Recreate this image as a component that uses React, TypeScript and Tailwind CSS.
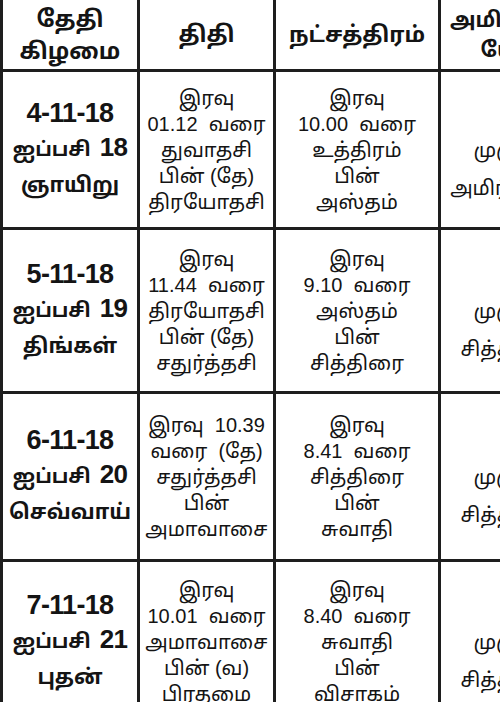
import React from 'react';

interface DayRow {
  date: string;
  monthDay: string;
  weekday: string;
  thithi: string[];
  star: string[];
  yogam: string[];
}

const rows: DayRow[] = [
  {
    date: '4-11-18',
    monthDay: '18',
    weekday: 'ஞாயிறு',
    thithi: ['இரவு', '01.12  வரை', 'துவாதசி', 'பின் (தே)', 'திரயோதசி'],
    star: ['இரவு', '10.00  வரை', 'உத்திரம்', 'பின்', 'அஸ்தம்'],
    yogam: ['நாள்', 'முழுவதும்', 'அமிர்தயோகம்'],
  },
  {
    date: '5-11-18',
    monthDay: '19',
    weekday: 'திங்கள்',
    thithi: ['இரவு', '11.44  வரை', 'திரயோதசி', 'பின் (தே)', 'சதுர்த்தசி'],
    star: ['இரவு', '9.10  வரை', 'அஸ்தம்', 'பின்', 'சித்திரை'],
    yogam: ['நாள்', 'முழுவதும்', 'சித்தயோகம்'],
  },
  {
    date: '6-11-18',
    monthDay: '20',
    weekday: 'செவ்வாய்',
    thithi: ['இரவு  10.39', 'வரை  (தே)', 'சதுர்த்தசி', 'பின்', 'அமாவாசை'],
    star: ['இரவு', '8.41  வரை', 'சித்திரை', 'பின்', 'சுவாதி'],
    yogam: ['நாள்', 'முழுவதும்', 'சித்தயோகம்'],
  },
  {
    date: '7-11-18',
    monthDay: '21',
    weekday: 'புதன்',
    thithi: ['இரவு', '10.01  வரை', 'அமாவாசை', 'பின் (வ)', 'பிரதமை'],
    star: ['இரவு', '8.40  வரை', 'சுவாதி', 'பின்', 'விசாகம்'],
    yogam: ['நாள்', 'முழுவதும்', 'சித்தயோகம்'],
  },
];

const Lines = ({ lines, className }: { lines: string[]; className?: string }) => (
  <div className={className}>
    {lines.map((l, i) => (
      <div key={i} className="whitespace-pre">
        {l}
      </div>
    ))}
  </div>
);

export default function App() {
  return (
    <div className="w-[500px] h-[702px] overflow-hidden bg-white font-['Liberation_Sans','Noto_Sans_Tamil','Lohit_Tamil',sans-serif] text-[#141414]">
      <div className="grid w-[610px] grid-cols-[134px_133px_162px_170px] grid-rows-[69px_155px_161px_165px_160px] gap-[3px] bg-[#1e1e1e] pl-[3px]">
        {/* header */}
        <div className="flex flex-col items-center justify-center bg-white text-[23px] font-bold leading-[32px]">
          <div>தேதி</div>
          <div>கிழமை</div>
        </div>
        <div className="flex items-center justify-center bg-white text-[23px] font-bold">திதி</div>
        <div className="flex items-center justify-center bg-white text-[22px] font-bold">நட்சத்திரம்</div>
        <div className="flex flex-col items-center justify-center bg-white text-[21px] font-bold leading-[30px]">
          <div>அமிர்த/சித்த</div>
          <div>யோகம்</div>
        </div>

        {rows.map((r) => (
          <React.Fragment key={r.date}>
            <div className="flex flex-col items-center justify-center bg-white font-bold">
              <div className="text-[27px] leading-[34px] tracking-tight">{r.date}</div>
              <div className="flex items-baseline gap-[9px] leading-[34px]">
                <span className="text-[20px]">ஐப்பசி</span>
                <span className="text-[26px] tracking-tight">{r.monthDay}</span>
              </div>
              <div className="text-[21px] leading-[38px]">{r.weekday}</div>
            </div>
            <Lines
              lines={r.thithi}
              className="flex flex-col items-center justify-center bg-white text-[20px] leading-[26px]"
            />
            <Lines
              lines={r.star}
              className="flex flex-col items-center justify-center bg-white text-[20px] leading-[26px]"
            />
            <Lines
              lines={r.yogam}
              className="flex flex-col items-center justify-center bg-white text-[20px] leading-[38px]"
            />
          </React.Fragment>
        ))}
      </div>
    </div>
  );
}
